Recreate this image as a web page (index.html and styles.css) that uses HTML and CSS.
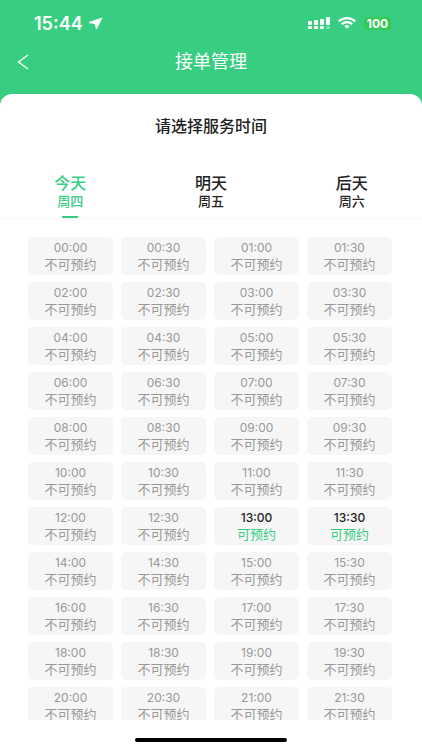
FILE: index.html
```html
<!DOCTYPE html>
<html lang="zh-CN">
<head>
    <meta charset="UTF-8">
    <meta name="viewport" content="width=device-width, initial-scale=1.0">
    <title>接单管理</title>
    <link rel="stylesheet" href="styles.css">
</head>
<body>
    <header class="header">
        <div class="status-bar">
            <span class="clock">15:44</span>
            <svg class="location" width="15" height="13" viewBox="0 0 15 13" fill="#fff" stroke="#fff" stroke-linejoin="round">
                <path d="M14 1 1 5.600 7.200 6.600 8.400 12z"/>
            </svg>
            <div class="status-icons">
                <svg width="22" height="13" viewBox="0 0 22 13" fill="#fff">
                    <rect x="0" y="4" width="4" height="4" rx="1"/>
                    <rect x="6" y="3" width="4" height="5" rx="1"/>
                    <rect x="12" y="2" width="4" height="6" rx="1"/>
                    <rect x="18" y="0" width="4" height="8" rx="1"/>
                    <rect x="0" y="9" width="4" height="3" rx="1"/>
                    <rect x="6" y="9" width="4" height="3" rx="1"/>
                    <rect x="12" y="9" width="4" height="3" rx="1"/>
                    <rect x="18" y="9" width="4" height="3" rx="1" opacity=".35"/>
                </svg>
                <svg width="18" height="12" viewBox="0 0 18 12" fill="none" stroke="#fff" stroke-width="2.2">
                    <path d="M.8 4.400C5.400 0 12.600 0 17.200 4.400"/>
                    <path d="M3.800 7.200c2.900-2.700 7.500-2.700 10.400 0"/>
                    <path d="M6.300 8.900c1.600-1.300 3.800-1.300 5.400 0L9 11.700z" fill="#fff" stroke="none"/>
                </svg>
                <span class="battery">100</span>
            </div>
        </div>
        <div class="nav-bar">
            <button class="back" type="button" aria-label="返回">
                <svg width="12" height="16" viewBox="0 0 12 16" fill="none" stroke="#fff" stroke-width="1.4">
                    <path d="M11 1 1.500 8l9.500 7"/>
                </svg>
            </button>
            <h1>接单管理</h1>
        </div>
    </header>

    <main class="panel">
        <h2>请选择服务时间</h2>
        <div class="tabs">
            <button class="tab active" type="button"><span class="day">今天</span><span class="week">周四</span></button>
            <button class="tab" type="button"><span class="day">明天</span><span class="week">周五</span></button>
            <button class="tab" type="button"><span class="day">后天</span><span class="week">周六</span></button>
        </div>
        <div class="slots" id="slots"></div>
    </main>
    <footer class="home-bar"><div class="home-line"></div></footer>

    <script>
        const slots = document.getElementById('slots');
        // 可预约的时间
        const available = ['13:00', '13:30'];

        // 00:00 到 21:30，每半小时一个时间段
        for (let i = 0; i < 44; i++) {
            const hour = String(Math.floor(i / 2)).padStart(2, '0');
            const time = hour + (i % 2 ? ':30' : ':00');
            const open = available.includes(time);
            const btn = document.createElement('button');
            btn.type = 'button';
            btn.className = open ? 'slot open' : 'slot';
            btn.disabled = !open;
            btn.innerHTML = `<span class="time">${time}</span><span class="state">${open ? '可预约' : '不可预约'}</span>`;
            slots.appendChild(btn);
        }
    </script>
</body>
</html>
```
FILE: styles.css
```css
* {
    box-sizing: border-box;
}
body {
    margin: 0;
    height: 100vh;
    display: flex;
    flex-direction: column;
    background: #38ce82;
    font-family: Inter, "Noto Sans CJK SC", sans-serif;
    color: #222;
}
button {
    border: none;
    padding: 0;
    background: none;
    font-family: inherit;
    color: inherit;
    cursor: pointer;
}
h1, h2 {
    margin: 0;
}
.header {
    color: #fff;
}
.status-bar {
    display: flex;
    align-items: center;
    height: 46px;
    padding: 0 31px 0 34px;
}
.clock {
    font-size: 18px;
    font-weight: 600;
}
.location {
    margin-left: 5px;
}
.status-icons {
    display: flex;
    align-items: center;
    gap: 8px;
    margin-left: auto;
}
.battery {
    width: 27px;
    border-radius: 4px;
    background: #36c759;
    font-size: 12px;
    font-weight: 700;
    line-height: 13px;
    text-align: center;
}
/* 两侧等宽，标题居中 */
.nav-bar {
    display: grid;
    grid-template-columns: 48px 1fr 48px;
    align-items: center;
    height: 48px;
    padding-bottom: 16px;
}
.nav-bar h1 {
    font-size: 18px;
    font-weight: 400;
    line-height: 32px;
    text-align: center;
}
.back {
    display: flex;
    align-items: center;
    height: 32px;
    padding-left: 17px;
}
.panel {
    flex: 1;
    min-height: 0;
    display: flex;
    flex-direction: column;
    background: #fff;
    border-radius: 12px 12px 0 0;
}
.panel h2 {
    padding: 22px 0;
    font-size: 16px;
    font-weight: 500;
    line-height: 20px;
    text-align: center;
}
.tabs {
    display: grid;
    grid-template-columns: repeat(3, 1fr);
    padding-top: 15px;
    border-bottom: 1px solid #f7f7f7;
}
.tab {
    display: flex;
    flex-direction: column;
    align-items: center;
    font-weight: 500;
}
.tab::after {
    content: "";
    width: 16px;
    height: 2px;
    margin-top: 7px;
}
.tab.active {
    color: #38ce82;
}
.tab.active::after {
    background: #38ce82;
}
.day {
    font-size: 16px;
    line-height: 20px;
}
.week {
    font-size: 13px;
    line-height: 16px;
}
.slots {
    flex: 1;
    min-height: 0;
    display: grid;
    grid-template-columns: repeat(4, 1fr);
    grid-auto-rows: 38px;
    gap: 7px 8px;
    margin-top: 18px;
    padding: 0 30px 0 28px;
    overflow-y: auto;
    scrollbar-width: none;
}
.slot {
    display: flex;
    flex-direction: column;
    align-items: center;
    justify-content: center;
    border-radius: 5px;
    background: #f6f6f6;
    color: #999;
}
.time {
    font-size: 12px;
    line-height: 16px;
}
.state {
    font-size: 13px;
    line-height: 16px;
}
.slot.open .time {
    color: #222;
    font-weight: 500;
}
.slot.open .state {
    color: #38ce82;
}
.home-bar {
    display: flex;
    justify-content: center;
    height: 30px;
    padding-top: 18px;
    background: #fff;
}
.home-line {
    width: 36%;
    height: 4px;
    border-radius: 2px;
    background: #000;
}
```
